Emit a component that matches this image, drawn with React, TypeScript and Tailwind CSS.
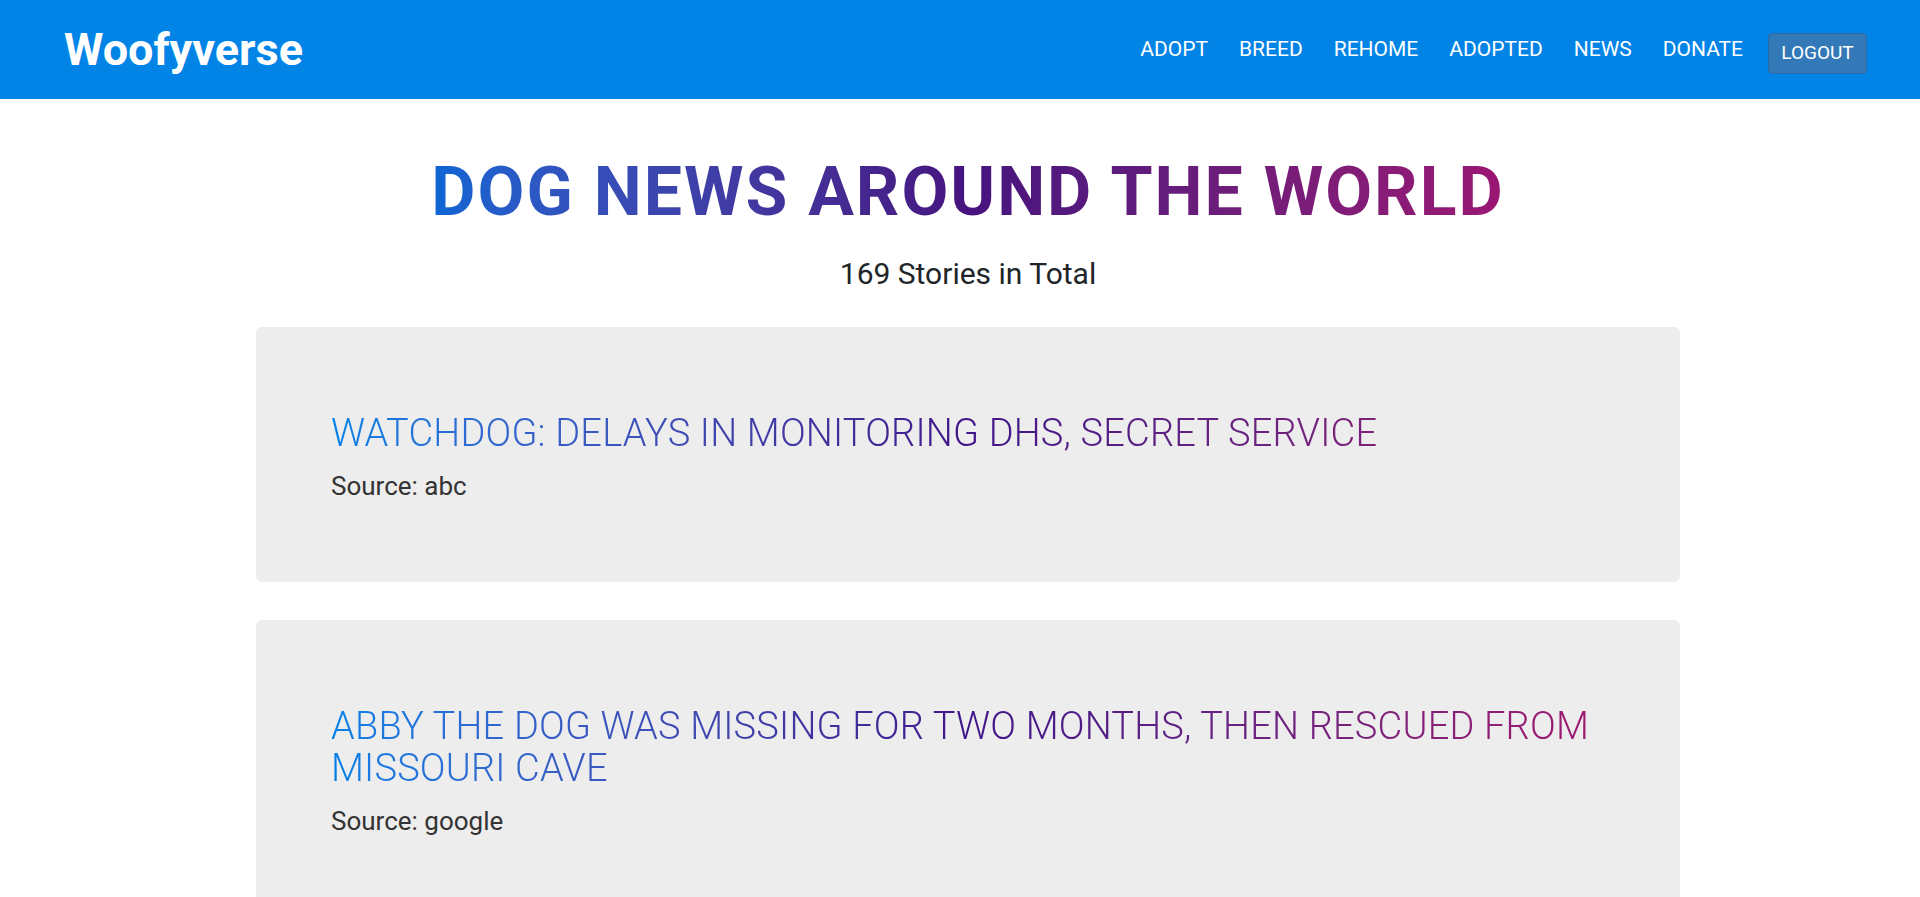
import { useState } from "react";

const stories = [
  { title: "Watchdog: Delays in monitoring DHS, Secret Service", source: "abc" },
  {
    title: "Abby the dog was missing for two months, then rescued from Missouri cave",
    source: "google",
  },
  { title: "Dog shelters see surge in adoptions over the holidays", source: "cnn" },
  { title: "Service dogs help veterans cope with PTSD", source: "bbc" },
  { title: "Lost retriever walks 60 miles to find its way home", source: "abc" },
  { title: "City opens its first off-leash dog park downtown", source: "google" },
  { title: "Study finds dogs can read human facial expressions", source: "reuters" },
  { title: "Rescue team saves puppy trapped in storm drain", source: "cnn" },
  { title: "Therapy dogs visit students during exam week", source: "bbc" },
  { title: "Police K9 retires after ten years of service", source: "abc" },
];

const navLinks = ["Adopt", "Breed", "Rehome", "Adopted", "News", "Donate"];

export default function App() {
  const [loggedIn, setLoggedIn] = useState(true);

  return (
    <div className="min-h-screen bg-white font-['Roboto','Liberation_Sans',sans-serif] text-[#212529]">
      {/* Navbar */}
      <nav className="h-[99px] bg-[#0284e7] flex items-center justify-between pl-[64px] pr-[53px]">
        <a href="#" className="text-[45px] font-bold text-white leading-none">
          Woofyverse
        </a>
        <div className="flex items-center gap-[31px]">
          {navLinks.map((link) => (
            <a
              key={link}
              href="#"
              className="text-[21px] uppercase text-white leading-none"
            >
              {link}
            </a>
          ))}
          <button
            onClick={() => setLoggedIn(!loggedIn)}
            className="ml-[-6px] mt-[7px] h-[41px] w-[99px] rounded-[4px] border border-[#2c6ba8] bg-[#3479b7] text-[19px] uppercase text-white"
          >
            {loggedIn ? "Logout" : "Login"}
          </button>
        </div>
      </nav>

      {/* News list */}
      <main className="pl-[16px] flex flex-col items-center pb-16">
        <h1 className="mt-[52px] text-[68px] leading-[82px] font-bold tracking-[2px] uppercase bg-linear-to-r from-[#0a66d4] via-[#46137f] to-[#9b1673] bg-clip-text text-transparent">
          Dog News Around The World
        </h1>
        <p className="mt-[23px] text-[30px] leading-[36px] text-[#212529]">
          169 Stories in Total
        </p>

        <div className="mt-[35px] w-[1424px] flex flex-col gap-[38px]">
          {stories.map((story, index) => (
            <div
              key={index}
              className="rounded-[6px] bg-[#ededed] px-[75px] pt-[85px] pb-[78px]"
            >
              <h2 className="text-[38px] leading-[42px] font-light tracking-[0.2px] uppercase bg-linear-to-r from-[#0081e8] via-[#40158a] to-[#a0176f] bg-clip-text text-transparent">
                {story.title}
              </h2>
              <p className="mt-[15px] text-[26px] leading-[35px] text-[#333]">
                Source: {story.source}
              </p>
            </div>
          ))}
        </div>
      </main>
    </div>
  );
}
